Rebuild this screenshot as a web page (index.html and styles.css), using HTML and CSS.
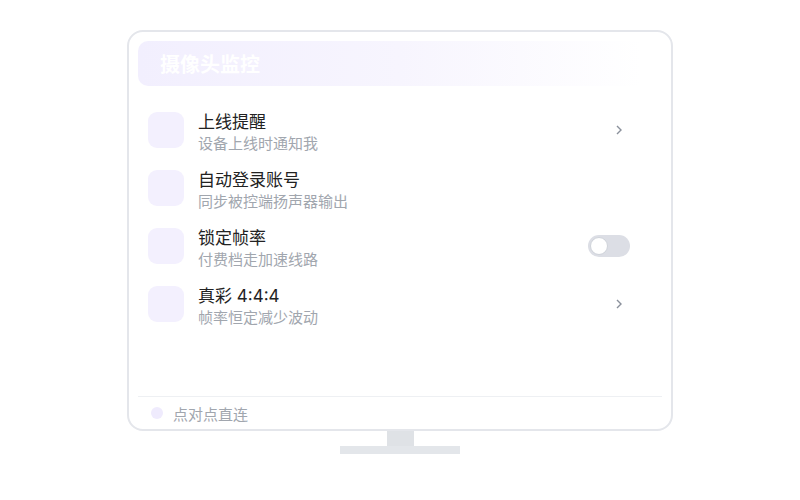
FILE: index.html
```html
<!DOCTYPE html>
<html lang="zh-CN">
<head>
  <meta charset="UTF-8">
  <meta name="viewport" content="width=device-width, initial-scale=1.0">
  <title>摄像头监控</title>
  <link rel="stylesheet" href="styles.css">
</head>
<body>
  <div class="scene">
    <div class="monitor">
      <div class="screen-header">摄像头监控</div>

      <ul class="settings">
        <li class="setting">
          <span class="setting-icon"></span>
          <div class="setting-text">
            <div class="setting-title">上线提醒</div>
            <div class="setting-desc">设备上线时通知我</div>
          </div>
          <svg class="chevron" width="6" height="10" viewBox="0 0 6 10"><polyline points="1,1 5,5 1,9" /></svg>
        </li>
        <li class="setting">
          <span class="setting-icon"></span>
          <div class="setting-text">
            <div class="setting-title">自动登录账号</div>
            <div class="setting-desc">同步被控端扬声器输出</div>
          </div>
        </li>
        <li class="setting">
          <span class="setting-icon"></span>
          <div class="setting-text">
            <div class="setting-title">锁定帧率</div>
            <div class="setting-desc">付费档走加速线路</div>
          </div>
          <span class="toggle"><span class="knob"></span></span>
        </li>
        <li class="setting">
          <span class="setting-icon"></span>
          <div class="setting-text">
            <div class="setting-title">真彩 4:4:4</div>
            <div class="setting-desc">帧率恒定减少波动</div>
          </div>
          <svg class="chevron" width="6" height="10" viewBox="0 0 6 10"><polyline points="1,1 5,5 1,9" /></svg>
        </li>
      </ul>

      <div class="monitor-footer">
        <span class="dot"></span>
        点对点直连
      </div>
    </div>
    <div class="stand-neck"></div>
    <div class="stand-base"></div>
  </div>
</body>
</html>
```

FILE: styles.css
```css
* {
  box-sizing: border-box;
}
body {
  margin: 0;
  background-color: #fff;
  font-family: 'Inter', 'Noto Sans CJK SC', sans-serif;
  color: #222;
}
.scene {
  display: flex;
  flex-direction: column;
  align-items: center;
  padding-top: 30px;
}
.monitor {
  width: 546px;
  height: 401px;
  display: flex;
  flex-direction: column;
  padding: 9px 9px 0;
  border: 2px solid #e4e6eb;
  border-radius: 16px;
  background-color: #fff;
}
.screen-header {
  height: 45px;
  display: flex;
  align-items: center;
  padding-left: 22px;
  border-radius: 10px;
  background: linear-gradient(90deg, #f2effe 0%, #f7f5fe 50%, #ffffff 96%);
  color: #fff;
  font-size: 20px;
  font-weight: bold;
}
.settings {
  flex: 1;
  list-style: none;
  margin: 0;
  padding: 26px 32px 0 10px;
  display: flex;
  flex-direction: column;
  gap: 22px;
}
.setting {
  display: flex;
  align-items: center;
  height: 36px;
}
.setting-icon {
  width: 36px;
  height: 36px;
  flex-shrink: 0;
  border-radius: 9px;
  background-color: #f3f0fe;
}
.setting-text {
  flex: 1;
  margin-left: 14px;
  padding-top: 4px;
}
.setting-title {
  font-size: 17px;
  line-height: 22px;
  color: #222;
}
.setting-desc {
  margin-top: 1px;
  font-size: 15px;
  line-height: 20px;
  color: #a1a6ae;
}
.chevron {
  margin-right: 8px;
  fill: none;
  stroke: #8a909b;
  stroke-width: 1.4;
}
.toggle {
  position: relative;
  width: 42px;
  height: 22px;
  border-radius: 11px;
  background-color: #dcdee5;
}
.knob {
  position: absolute;
  top: 2px;
  left: 2px;
  width: 18px;
  height: 18px;
  border-radius: 50%;
  background-color: #fff;
  border: 1px solid #cfd3da;
}
.monitor-footer {
  height: 33px;
  display: flex;
  align-items: center;
  gap: 10px;
  padding-left: 13px;
  border-top: 1px solid #eef0f3;
  font-size: 15px;
  color: #a1a6ae;
}
.dot {
  width: 12px;
  height: 12px;
  border-radius: 50%;
  background-color: #efebfd;
}
.stand-neck {
  width: 27px;
  height: 15px;
  background-color: #dfe2e6;
}
.stand-base {
  width: 120px;
  height: 8px;
  background-color: #e3e6ea;
}
```
